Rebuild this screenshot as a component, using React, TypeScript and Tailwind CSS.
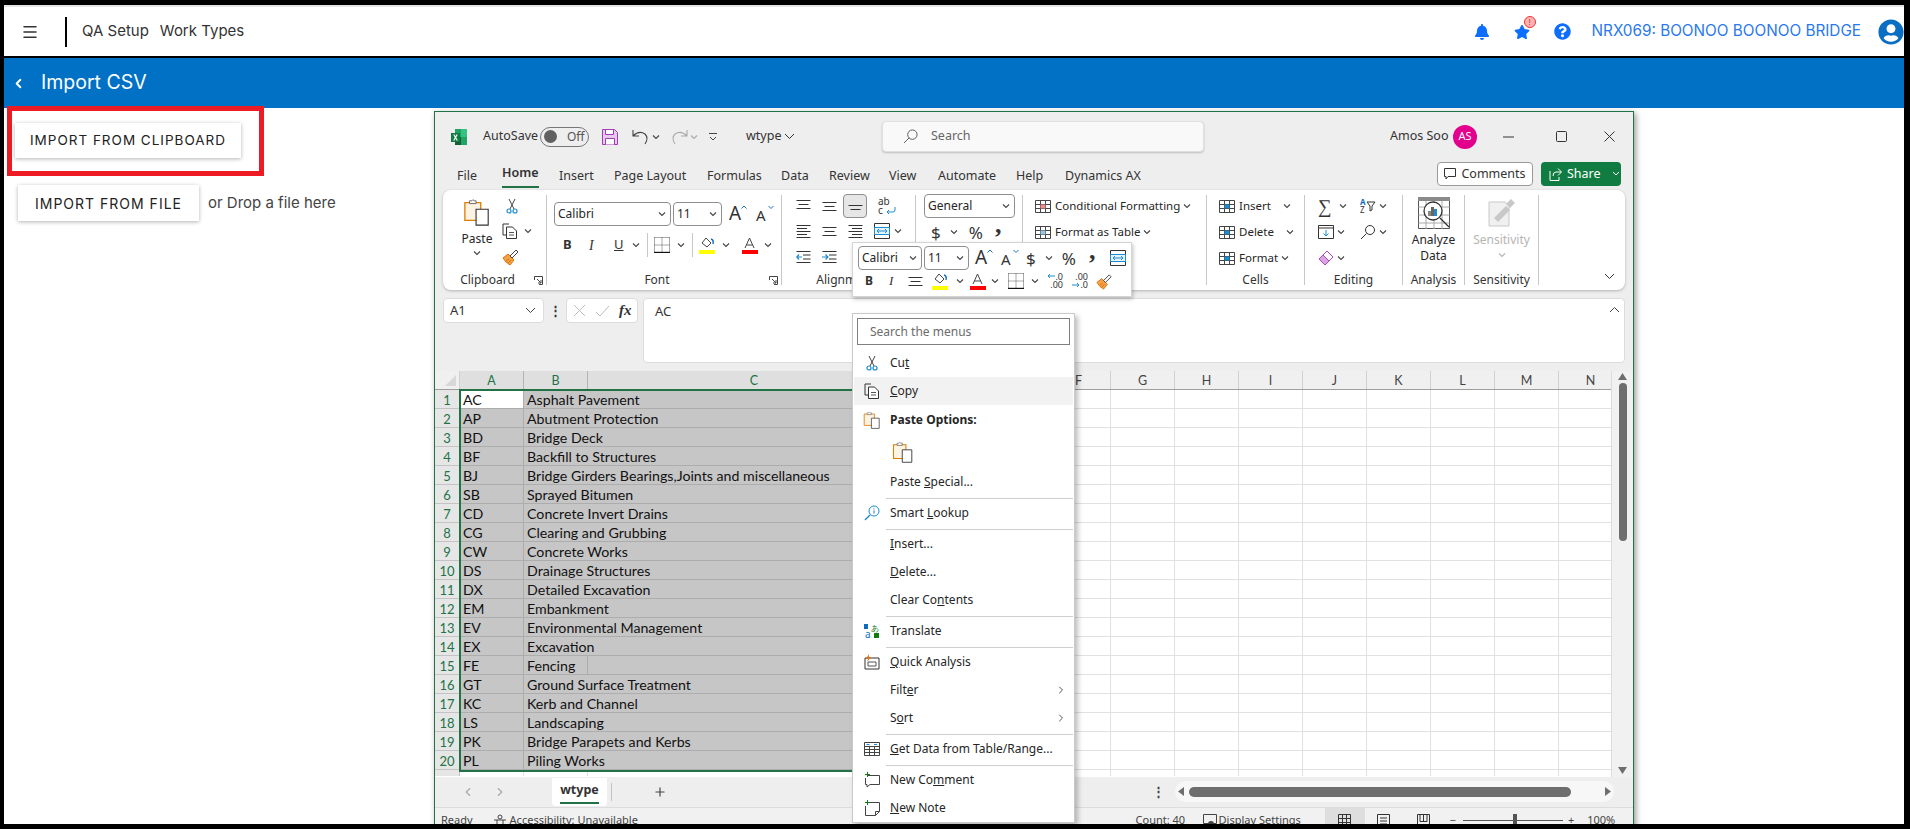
import type { ReactNode } from 'react'
import { ChevronLeft, ChevronRight, Menu, Plus } from 'lucide-react'
import { FaBell, FaQuestionCircle, FaStar, FaUserCircle } from 'react-icons/fa'

const rows = [
  ['AC', 'Asphalt Pavement'],
  ['AP', 'Abutment Protection'],
  ['BD', 'Bridge Deck'],
  ['BF', 'Backfill to Structures'],
  ['BJ', 'Bridge Girders Bearings,Joints and miscellaneous'],
  ['SB', 'Sprayed Bitumen'],
  ['CD', 'Concrete Invert Drains'],
  ['CG', 'Clearing and Grubbing'],
  ['CW', 'Concrete Works'],
  ['DS', 'Drainage Structures'],
  ['DX', 'Detailed Excavation'],
  ['EM', 'Embankment'],
  ['EV', 'Environmental Management'],
  ['EX', 'Excavation'],
  ['FE', 'Fencing'],
  ['GT', 'Ground Surface Treatment'],
  ['KC', 'Kerb and Channel'],
  ['LS', 'Landscaping'],
  ['PK', 'Bridge Parapets and Kerbs'],
  ['PL', 'Piling Works'],
]

const emptyCols = ['F', 'G', 'H', 'I', 'J', 'K', 'L', 'M', 'N']

function Chev({ className = '' }: { className?: string }) {
  return (
    <svg width="8" height="8" viewBox="0 0 8 8" className={`shrink-0 ${className}`}>
      <path d="M1 2.5 4 5.5 7 2.5" fill="none" stroke="#444" strokeWidth="1.1" />
    </svg>
  )
}

function PasteIcon({ size = 28 }: { size?: number }) {
  return (
    <svg width={size} height={size} viewBox="0 0 28 30" className="shrink-0">
      <path d="M1 5h17v19H1z" fill="#fdf3e3" stroke="#e07b00" strokeWidth="1.4" />
      <path d="M6 6V3h2.500q1-2.500 2.500 0H13v3z" fill="#fff" stroke="#666" />
      <path d="M13 12h13v17H13z" fill="#fff" stroke="#333" strokeWidth="1.200" />
    </svg>
  )
}

function Scissors({ size = 16 }: { size?: number }) {
  return (
    <svg width={size} height={size} viewBox="0 0 16 16" className="shrink-0">
      <path d="M5 1l5 10M11 1 6 11" stroke="#444" strokeWidth="1" fill="none" />
      <circle cx="5" cy="13" r="2" fill="none" stroke="#1e8bcd" strokeWidth="1.200" />
      <circle cx="11" cy="13" r="2" fill="none" stroke="#1e8bcd" strokeWidth="1.200" />
    </svg>
  )
}

function CopyIcon({ size = 16 }: { size?: number }) {
  return (
    <svg width={size} height={size} viewBox="0 0 16 16" className="shrink-0">
      <path d="M7 1H1v11h3" fill="none" stroke="#333" />
      <path d="M4.500 4h6l4 4v7.500h-10z" fill="#fff" stroke="#333" />
      <path d="M7 9.500h5M7 12h5" stroke="#555" />
    </svg>
  )
}

function Brush({ size = 18 }: { size?: number }) {
  return (
    <svg width={size} height={size} viewBox="0 0 18 18" className="shrink-0">
      <path d="M1 10l5-4 6 6-4 5q-4-2-7-7z" fill="#f7a145" stroke="#d9730d" />
      <path d="M4 13l3-2M6 15l3-3" stroke="#d9730d" />
      <path d="M8 8l6-6 2 2-6 6z" fill="#fff" stroke="#444" />
    </svg>
  )
}

function Lines({ align, y = 'center' }: { align: 'l' | 'c' | 'r'; y?: 'top' | 'center' | 'bottom' }) {
  const offs = { top: 1, center: 3, bottom: 6 }[y]
  const short = align === 'l' ? 'M1 0h10' : align === 'c' ? 'M2.500 0h9' : 'M4 0h10'
  if (y !== 'center' || align === 'c') {
    return (
      <svg width="15" height="14" viewBox="0 0 15 14" className="shrink-0">
        <path d={`M0.500 ${offs + 0.5}h14M2.500 ${offs + 4.5}h10M0.500 ${offs + 8.5}h14`} stroke="#333" fill="none" />
      </svg>
    )
  }
  return (
    <svg width="15" height="14" viewBox="0 0 15 14" className="shrink-0">
      <path d="M0.500 1.500h14M0.500 7.500h14M0.500 13.500h14" stroke="#333" fill="none" />
      <path d={`${short.replace(' 0', ' 4.5')}`} stroke="#333" fill="none" />
      <path d={`${short.replace(' 0', ' 10.5')}`} stroke="#333" fill="none" />
    </svg>
  )
}

function Indent({ out }: { out?: boolean }) {
  return (
    <svg width="15" height="14" viewBox="0 0 15 14" className="shrink-0">
      <path d="M0.500 1.500h14M7 5h7.500M7 9h7.500M0.500 12.500h14" stroke="#333" fill="none" />
      <path d={out ? 'M6 7H1m2-2.500L.8 7 3 9.500' : 'M0 7h5.500M3.500 4.500 6 7 3.500 9.500'} stroke="#1e8bcd" strokeWidth="1.200" fill="none" />
    </svg>
  )
}

function Merge({ size = 16 }: { size?: number }) {
  return (
    <svg width={size} height={size} viewBox="0 0 16 16" className="shrink-0">
      <path d="M.5.500h15v15H.500zM.5 4.500h15M.5 11.500h15" stroke="#333" fill="none" />
      <path d="M.5 4.500h15v7H.500z" fill="#e6f3fb" stroke="#1e8bcd" />
      <path d="M3 8h10M5 6 3 8l2 2M11 6l2 2-2 2" stroke="#1e8bcd" fill="none" />
    </svg>
  )
}

function Borders() {
  return (
    <svg width="16" height="16" viewBox="0 0 16 16" className="shrink-0">
      <path d="M.5.500h15M.5.500v15M15.500.500v15M8 .5v15M.5 8h15" stroke="#555" strokeDasharray="1 1" fill="none" />
      <path d="M0 15.500h16" stroke="#111" strokeWidth="1.400" />
    </svg>
  )
}

function FillColor() {
  return (
    <svg width="17" height="17" viewBox="0 0 17 17" className="shrink-0">
      <path d="M7 1l5 5-4 4-5-4z" fill="#fff" stroke="#444" />
      <path d="M12 2q3 1 2 5" fill="none" stroke="#1e6fc8" strokeWidth="1.500" />
      <path d="M0 13h16v4H0z" fill="#ffff00" />
    </svg>
  )
}

function FontColor() {
  return (
    <svg width="17" height="17" viewBox="0 0 17 17" className="shrink-0">
      <path d="M4 11 8.500 1 13 11M5.500 8h6" fill="none" stroke="#444" />
      <path d="M1 13h16v4H1z" fill="#ff0000" />
    </svg>
  )
}

function GrowA({ shrink }: { shrink?: boolean }) {
  return (
    <div className="relative flex h-[18px] w-[18px] shrink-0 items-end">
      <span className={`leading-none text-[#333] ${shrink ? 'text-[15px]' : 'text-[19px]'}`}>A</span>
      <svg width="6" height="5" viewBox="0 0 6 5" className="absolute right-0 top-0">
        <path d={shrink ? 'M.5 1 3 3.500 5.500 1' : 'M.5 3.500 3 1l2.500 2.500'} stroke="#1e6fc8" fill="none" />
      </svg>
    </div>
  )
}

function Decimal({ more }: { more?: boolean }) {
  return (
    <div className="relative flex h-[16px] w-[16px] shrink-0 flex-col items-end text-[9px] leading-[8px] text-[#333]">
      <span>{more ? '.00' : '.0'}</span>
      <span>{more ? '.0' : '.00'}</span>
      <svg width="8" height="6" viewBox="0 0 8 6" className={`absolute left-0 ${more ? 'top-[9px]' : 'top-0'}`}>
        <path d={more ? 'M0 3h7M5 1l2 2-2 2' : 'M8 3H1M3 1 1 3l2 2'} stroke="#1e8bcd" fill="none" />
      </svg>
    </div>
  )
}

function Dropdown({ label, w }: { label: string; w: string }) {
  return (
    <div className={`flex h-[24px] ${w} items-center justify-between rounded-[4px] border border-[#8f8f8f] bg-white pl-[3px] pr-[4px] text-[12px] text-[#262626]`}>
      <span>{label}</span>
      <Chev />
    </div>
  )
}

function Group({ label, w, children, launcher, labelPad = '' }: { label: string; w: string; children: ReactNode; launcher?: boolean; labelPad?: string }) {
  return (
    <div className={`relative my-[5px] flex ${w} shrink-0 flex-col border-r border-[#c8c8c8]`}>
      <div className="min-h-0 flex-1">{children}</div>
      <div className={`-mb-[3px] h-[16px] text-center text-[12px] leading-[16px] text-[#333] ${labelPad}`}>{label}</div>
      {launcher && (
        <svg width="9" height="9" viewBox="0 0 9 9" className="absolute bottom-0 right-[3px]">
          <path d="M.5 4V.500H8.500V8.500H5M3 3l4 4M7 4v3H4" stroke="#444" fill="none" />
        </svg>
      )}
    </div>
  )
}

function StyleRow({ icon, label, chevMargin }: { icon: ReactNode; label: string; chevMargin?: string }) {
  return (
    <div className="flex h-[26px] items-center">
      {icon}
      <span className="ml-[4px] whitespace-nowrap text-[11.5px] text-[#262626]">{label}</span>
      <Chev className={chevMargin ?? 'ml-[3px]'} />
    </div>
  )
}

function TableIcon({ tint, mark }: { tint: string; mark?: ReactNode }) {
  return (
    <svg width="16" height="16" viewBox="0 0 16 16" className="shrink-0">
      <path d="M.5 2.500h15v12H.500zM.5 6.500h15M.5 10.500h15M5.500 2.500v12M10.500 2.500v12" stroke="#444" fill="none" />
      <path d="M5.500 6.500h5v4h-5z" fill={tint} />
      {mark}
    </svg>
  )
}

function MenuItem({ icon, children, arrow, hover, bold, h = 'h-[28px]' }: { icon?: ReactNode; children: ReactNode; arrow?: boolean; hover?: boolean; bold?: boolean; h?: string }) {
  return (
    <div className={`mx-[1px] flex ${h} items-center text-[12px] ${hover ? 'bg-[#f2f2f2]' : ''} ${bold ? 'font-bold' : ''}`}>
      <div className="flex w-[36px] shrink-0 justify-center">{icon}</div>
      <div className="flex-1 whitespace-nowrap text-[#262626]">{children}</div>
      {arrow && <ChevronRight size={12} className="mr-[6px] text-[#555]" />}
    </div>
  )
}

function Sep() {
  return <div className="ml-[33px] mr-[1px] h-[3px] border-b border-[#cfcfcf]" />
}

function ContextMenu() {
  return (
    <div className="absolute left-[417px] top-[201px] w-[223px] border border-[#c9c9c9] bg-white pt-[4px] font-['Noto_Sans',sans-serif] shadow-[3px_3px_5px_rgba(0,0,0,0.25)]">
      <div className="mx-[4px] mb-[4px] flex h-[27px] items-center border border-[#7f7f7f] pl-[12px] text-[12px] text-[#6b6b6b]">Search the menus</div>
      <MenuItem icon={<Scissors />}>Cu<u>t</u></MenuItem>
      <MenuItem icon={<CopyIcon />} hover><u>C</u>opy</MenuItem>
      <MenuItem icon={<PasteIcon size={18} />} bold h="h-[30px]">Paste Options:</MenuItem>
      <div className="flex h-[33px] items-center pl-[39px]"><PasteIcon size={22} /></div>
      <MenuItem>Paste <u>S</u>pecial...</MenuItem>
      <Sep />
      <MenuItem icon={
        <svg width="16" height="16" viewBox="0 0 16 16"><circle cx="10" cy="6" r="5" fill="none" stroke="#1e8bcd" /><path d="M6 10 1 15" stroke="#1e8bcd" strokeWidth="1.500" /><path d="M10 3.500v1M10 5.500v3" stroke="#1e6fc8" /></svg>
      }>Smart <u>L</u>ookup</MenuItem>
      <Sep />
      <MenuItem><u>I</u>nsert...</MenuItem>
      <MenuItem><u>D</u>elete...</MenuItem>
      <MenuItem>Clear Co<u>n</u>tents</MenuItem>
      <Sep />
      <MenuItem icon={
        <svg width="16" height="16" viewBox="0 0 16 16"><path d="M0 1h4v5H0z" fill="#0f6cbd" /><text x="1" y="15" fontSize="10" fill="#0f6cbd">a</text><path d="M10 10h5v5h-5z" fill="#107c10" /><text x="7" y="8" fontSize="8" fill="#107c10">あ</text></svg>
      }>Translate</MenuItem>
      <Sep />
      <MenuItem icon={
        <svg width="16" height="16" viewBox="0 0 16 16"><path d="M1 4h14v11H1z" fill="none" stroke="#333" /><path d="M4 8h8v4H4z" fill="none" stroke="#555" /><path d="M5 0 2 5h2L3 8l4-5H5z" fill="#e8710a" /></svg>
      }><u>Q</u>uick Analysis</MenuItem>
      <MenuItem arrow>Filt<u>e</u>r</MenuItem>
      <MenuItem arrow>S<u>o</u>rt</MenuItem>
      <Sep />
      <MenuItem icon={
        <svg width="16" height="16" viewBox="0 0 16 16"><path d="M.5 1.500h15v13H.500zM.5 5.500h15M.5 8.500h15M.5 11.500h15M5.500 5.500v9M10.500 5.500v9" stroke="#444" fill="none" /><path d="M2.500 3.500h3M10 3.500h3" stroke="#1e8bcd" /></svg>
      }><u>G</u>et Data from Table/Range...</MenuItem>
      <Sep />
      <MenuItem icon={
        <svg width="16" height="16" viewBox="0 0 16 16"><path d="M4 3.500h11.500v9H6L3 15v-2.500H1.500V6" fill="none" stroke="#444" /><path d="M3.500 0v5M1 2.500h5" stroke="#107c10" /></svg>
      }>New Co<u>m</u>ment</MenuItem>
      <MenuItem icon={
        <svg width="16" height="16" viewBox="0 0 16 16"><path d="M5 2.500h10.500v9l-4 4h-10V6" fill="none" stroke="#444" /><path d="M11.500 15.500v-4h4" fill="none" stroke="#444" /><path d="M3.500 0v5M1 2.500h5" stroke="#107c10" /></svg>
      }><u>N</u>ew Note</MenuItem>
    </div>
  )
}

function MiniToolbar() {
  return (
    <div className="absolute left-[417px] top-[130px] flex h-[55px] w-[280px] flex-col border border-[#d4d4d4] bg-white pl-[5px] pt-[3px] font-['Noto_Sans',sans-serif] shadow-[1px_2px_4px_rgba(0,0,0,0.25)]">
      <div className="flex h-[24px] items-center">
        <Dropdown label="Calibri" w="w-[64px]" />
        <div className="ml-[2px]"><Dropdown label="11" w="w-[45px]" /></div>
        <div className="ml-[6px]"><GrowA /></div>
        <div className="ml-[8px]"><GrowA shrink /></div>
        <span className="ml-[7px] text-[17px] leading-none text-[#333]">$</span>
        <Chev className="ml-[9px]" />
        <span className="ml-[9px] text-[17px] leading-none text-[#333]">%</span>
        <span className="-mt-[14px] ml-[13px] font-['Liberation_Serif',serif] text-[26px] font-bold leading-[12px] text-[#333]">,</span>
        <div className="ml-[15px]"><Merge /></div>
      </div>
      <div className="flex h-[22px] items-center pl-[7px]">
        <span className="w-[10px] text-[12px] font-bold text-[#333]">B</span>
        <span className="ml-[14px] w-[10px] font-['Liberation_Serif',serif] text-[13px] italic text-[#333]">I</span>
        <div className="ml-[9px]"><Lines align="c" /></div>
        <div className="ml-[9px]"><FillColor /></div>
        <Chev className="ml-[7px]" />
        <div className="ml-[5px]"><FontColor /></div>
        <Chev className="ml-[5px]" />
        <div className="ml-[9px]"><Borders /></div>
        <Chev className="ml-[7px]" />
        <div className="ml-[8px]"><Decimal /></div>
        <div className="ml-[9px]"><Decimal more /></div>
        <div className="ml-[8px]"><Brush size={17} /></div>
      </div>
    </div>
  )
}

function Ribbon() {
  return (
    <div className="mx-[8px] flex h-[100px] shrink-0 rounded-[8px] bg-white shadow-[0_1px_3px_rgba(0,0,0,0.25)]">
      <Group label="Clipboard" w="w-[104px]" launcher labelPad="pr-[14px]">
        <div className="flex">
          <div className="ml-[20px] flex w-[28px] flex-col items-center">
            <div className="mt-[3px]"><PasteIcon /></div>
            <span className="mt-[5px] text-[12px] leading-[16px] text-[#262626]">Paste</span>
            <Chev className="mt-[2px]" />
          </div>
          <div className="ml-[11px] flex flex-col gap-[9px] pt-[3px]">
            <div className="ml-[2px]"><Scissors /></div>
            <div className="flex items-center"><CopyIcon /><Chev className="ml-[6px]" /></div>
            <Brush />
          </div>
        </div>
      </Group>
      <Group label="Font" w="w-[235px]" launcher labelPad="pr-[14px]">
        <div className="ml-[7px] mt-[7px] flex items-center">
          <Dropdown label="Calibri" w="w-[117px]" />
          <div className="ml-[2px]"><Dropdown label="11" w="w-[49px]" /></div>
          <div className="ml-[7px]"><GrowA /></div>
          <div className="ml-[9px]"><GrowA shrink /></div>
        </div>
        <div className="ml-[16px] mt-[10px] flex h-[18px] items-center">
          <span className="w-[10px] text-[13px] font-bold text-[#333]">B</span>
          <span className="ml-[16px] w-[8px] font-['Liberation_Serif',serif] text-[14px] italic text-[#333]">I</span>
          <span className="ml-[17px] w-[10px] text-[13px] text-[#333] underline">U</span>
          <Chev className="ml-[8px]" />
          <div className="ml-[7px] h-[24px] w-px bg-[#c8c8c8]" />
          <div className="ml-[6px]"><Borders /></div>
          <Chev className="ml-[7px]" />
          <div className="ml-[7px] h-[24px] w-px bg-[#c8c8c8]" />
          <div className="ml-[6px]"><FillColor /></div>
          <Chev className="ml-[6px]" />
          <div className="ml-[11px]"><FontColor /></div>
          <Chev className="ml-[6px]" />
        </div>
      </Group>
      <Group label="Alignment" w="w-[134px]" labelPad="pr-[6px]">
        <div className="-mt-[1px] ml-[14px] flex h-[24px] items-center gap-[11px]">
          <Lines align="c" y="top" />
          <Lines align="c" y="center" />
          <div className="-ml-[5px] flex h-[24px] w-[24px] items-center justify-center rounded-[4px] border border-[#8f8f8f] bg-[#e6e6e6]"><Lines align="c" y="bottom" /></div>
          <div className="relative h-[18px] w-[16px] text-[10px] leading-[9px] text-[#333]">
            ab<br />c
            <svg width="11" height="8" viewBox="0 0 11 8" className="absolute bottom-0 right-[-2px]"><path d="M10 0v3q0 2-2 2H2M4 3 2 5l2 2" fill="none" stroke="#1e8bcd" /></svg>
          </div>
        </div>
        <div className="ml-[14px] mt-[5px] flex h-[16px] items-center gap-[11px]">
          <Lines align="l" />
          <Lines align="c" />
          <Lines align="r" />
          <Merge />
          <Chev className="-ml-[7px]" />
        </div>
        <div className="ml-[14px] mt-[11px] flex h-[14px] items-center gap-[11px]">
          <Indent out />
          <Indent />
        </div>
      </Group>
      <Group label="" w="w-[107px]">
        <div className="-mt-[1px] ml-[8px]"><Dropdown label="General" w="w-[91px]" /></div>
        <div className="ml-[15px] mt-[5px] flex h-[18px] items-center">
          <span className="text-[17px] leading-none text-[#333]">$</span>
          <Chev className="ml-[9px]" />
          <span className="ml-[11px] text-[17px] leading-none text-[#333]">%</span>
          <span className="-mt-[14px] ml-[12px] font-['Liberation_Serif',serif] text-[26px] font-bold leading-[12px] text-[#333]">,</span>
        </div>
      </Group>
      <Group label="" w="w-[184px]">
        <div className="-mt-[2px] ml-[12px]">
          <StyleRow icon={<TableIcon tint="#f48a8a" />} label="Conditional Formatting" />
          <StyleRow icon={<TableIcon tint="#9cc7ea" />} label="Format as Table" />
        </div>
      </Group>
      <Group label="Cells" w="w-[98px]">
        <div className="-mt-[2px] ml-[12px]">
          <StyleRow icon={<TableIcon tint="#1e8bcd" />} label="Insert" chevMargin="ml-[12px]" />
          <StyleRow icon={<TableIcon tint="#1e8bcd" />} label="Delete" chevMargin="ml-[12px]" />
          <StyleRow icon={<TableIcon tint="#1e8bcd" />} label="Format" chevMargin="ml-[3px]" />
        </div>
      </Group>
      <Group label="Editing" w="w-[98px]">
        <div className="-mt-[2px] ml-[13px] grid grid-cols-2">
          <div className="flex h-[26px] items-center">
            <span className="w-[14px] font-['Liberation_Serif',serif] text-[19px] leading-none text-[#333]">∑</span>
            <Chev className="ml-[7px]" />
          </div>
          <div className="flex h-[26px] items-center">
            <svg width="16" height="16" viewBox="0 0 16 16"><text x="0" y="7" fontSize="8" fontWeight="bold" fill="#0f6cbd">A</text><text x="0" y="15" fontSize="8" fill="#333">Z</text><path d="M7 4h8l-3 4v4l-2 1V8z" fill="none" stroke="#333" /></svg>
            <Chev className="ml-[3px]" />
          </div>
          <div className="flex h-[26px] items-center">
            <svg width="16" height="16" viewBox="0 0 16 16"><path d="M.5 1.500h15v13H.500zM.5 4h15" stroke="#333" fill="none" /><path d="M8 6v6M5.500 9.500 8 12l2.500-2.500" stroke="#1e8bcd" fill="none" /></svg>
            <Chev className="ml-[3px]" />
          </div>
          <div className="flex h-[26px] items-center">
            <svg width="16" height="16" viewBox="0 0 16 16"><circle cx="10" cy="6" r="4.500" fill="none" stroke="#333" /><path d="M6.500 9.500 1 15" stroke="#333" /></svg>
            <Chev className="ml-[3px]" />
          </div>
          <div className="flex h-[26px] items-center">
            <svg width="16" height="16" viewBox="0 0 16 16"><path d="M1 9l8-8 6 6-8 8z" fill="#fff" stroke="#b146c2" /><path d="M1 9l4-4 6 6-4 4z" fill="#d8a5e0" stroke="#b146c2" /></svg>
            <Chev className="ml-[3px]" />
          </div>
        </div>
      </Group>
      <Group label="Analysis" w="w-[62px]">
        <div className="flex flex-col items-center">
          <svg width="32" height="32" viewBox="0 0 32 32" className="mt-[2px]">
            <path d="M.5.500h31v31H.500z" fill="#fff" stroke="#555" />
            <path d="M0 0h32v4H0z" fill="#8a8a8a" />
            <path d="M.5 10h31M.5 18h31M.5 26h31M8 4v28M16 4v28M24 4v28" stroke="#aaa" />
            <circle cx="15" cy="14" r="9" fill="#fff" stroke="#333" strokeWidth="1.300" />
            <path d="M22 21l9 9" stroke="#333" strokeWidth="1.300" />
            <path d="M10 14h3v5h-3z" fill="#888" /><path d="M13 10h3v9h-3z" fill="#666" /><path d="M16 12h3v7h-3z" fill="#1e8bcd" />
          </svg>
          <span className="mt-[3px] text-center text-[12px] leading-[16px] text-[#262626]">Analyze<br />Data</span>
        </div>
      </Group>
      <Group label="Sensitivity" w="w-[74px]">
        <div className="flex flex-col items-center">
          <svg width="28" height="30" viewBox="0 0 28 30" className="mt-[3px]">
            <path d="M1 4h16l4 4v20H1z" fill="#f0f0f0" stroke="#c8c8c8" />
            <path d="M6 20 18 8l4 4-12 12z" fill="#c8c8c8" />
            <path d="M18 6l5-5 4 4-5 5z" fill="#c8c8c8" />
          </svg>
          <span className="mt-[4px] text-[12px] leading-[16px] text-[#b5b5b5]">Sensitivity</span>
          <Chev className="mt-[3px] opacity-40" />
        </div>
      </Group>
      <div className="flex flex-1 items-end justify-end pb-[10px] pr-[10px]">
        <svg width="11" height="7" viewBox="0 0 11 7"><path d="M1 1l4.500 4.500L10 1" stroke="#333" fill="none" /></svg>
      </div>
    </div>
  )
}

function TitleBar() {
  return (
    <div className="flex h-[48px] shrink-0 items-center pt-[1px] text-[12.5px] text-[#333]">
      <svg width="16" height="16" viewBox="0 0 16 16" className="ml-[16px] shrink-0">
        <path d="M4 0h12v16H4z" fill="#21a366" />
        <path d="M10 0h6v8h-6z" fill="#33c481" />
        <path d="M4 8h6v8H4z" fill="#185c37" />
        <path d="M0 4h9v9H0z" fill="#107c41" />
        <path d="M2.200 5.500h1.400L4.500 7.300l1-1.800h1.300L5.200 8.500l1.700 3H5.500l-1-2-1 2H2.100l1.700-3z" fill="#fff" />
      </svg>
      <span className="ml-[16px] w-[50px]">AutoSave</span>
      <div className="ml-[7px] flex h-[20px] w-[49px] items-center rounded-full border border-[#777] pl-[3px]">
        <div className="h-[13px] w-[13px] rounded-full bg-[#616161]" />
        <span className="ml-[10px] text-[12px] text-[#555]">Off</span>
      </div>
      <svg width="16" height="16" viewBox="0 0 16 16" className="ml-[13px] shrink-0">
        <path d="M.5.500h12l3 3v12H.500z" fill="#e8c9ee" stroke="#a23cb4" />
        <path d="M3.500.5h8v5h-8zM3.500 15.500v-6h9v6" fill="#fff" stroke="#a23cb4" />
      </svg>
      <svg width="18" height="16" viewBox="0 0 18 16" className="ml-[14px] shrink-0">
        <path d="M1 1v6h6M1 7q6-6 12-2 4 4 0 10" fill="none" stroke="#444" strokeWidth="1.100" />
      </svg>
      <Chev className="ml-[2px]" />
      <svg width="18" height="16" viewBox="0 0 18 16" className="ml-[10px] shrink-0">
        <path d="M17 1v6h-6M17 7q-6-6-12-2-4 4 0 10" fill="none" stroke="#aaa" strokeWidth="1.100" />
      </svg>
      <Chev className="ml-[2px] opacity-40" />
      <svg width="8" height="8" viewBox="0 0 8 8" className="ml-[11px] shrink-0">
        <path d="M0 .5h8M1 4l3 3 3-3" stroke="#444" fill="none" />
      </svg>
      <span className="ml-[29px] w-[38px] text-[12.5px]">wtype</span>
      <svg width="11" height="7" viewBox="0 0 11 7" className="shrink-0"><path d="M1 1l4.500 4.500L10 1" stroke="#333" fill="none" /></svg>
      <div className="ml-[87px] flex h-[31px] w-[322px] items-center rounded-[4px] border border-[#e0e0e0] bg-[#f9f9f9] pl-[20px] shadow-[0_1px_2px_rgba(0,0,0,0.2)]">
        <svg width="15" height="15" viewBox="0 0 16 16"><circle cx="10" cy="6" r="5" fill="none" stroke="#555" /><path d="M6.500 9.500 1 15" stroke="#555" /></svg>
        <span className="ml-[13px] text-[#666]">Search</span>
      </div>
      <span className="ml-[186px] w-[54px] whitespace-nowrap">Amos Soo</span>
      <div className="ml-[9px] flex h-[24px] w-[24px] items-center justify-center rounded-full bg-[#e3008c] text-[11px] text-white">AS</div>
      <svg width="11" height="2" viewBox="0 0 11 2" className="ml-[26px] shrink-0"><path d="M0 1h11" stroke="#333" /></svg>
      <svg width="11" height="11" viewBox="0 0 11 11" className="ml-[42px] shrink-0"><rect x=".5" y=".5" width="10" height="10" rx="1" fill="none" stroke="#333" /></svg>
      <svg width="11" height="11" viewBox="0 0 11 11" className="ml-[37px] shrink-0"><path d="M.5.500l10 10M10.500.500l-10 10" stroke="#333" /></svg>
    </div>
  )
}

function MenuTabs() {
  return (
    <div className="flex h-[30px] shrink-0 pl-[22px] text-[12.5px] leading-[32px] text-[#333]">
      <span className="w-[45px]">File</span>
      <div className="w-[57px]">
        <span className="block w-[37px] border-b-2 border-[#217346] font-semibold leading-[26px]">Home</span>
      </div>
      <span className="w-[55px]">Insert</span>
      <span className="w-[93px]">Page Layout</span>
      <span className="w-[74px]">Formulas</span>
      <span className="w-[48px]">Data</span>
      <span className="w-[60px]">Review</span>
      <span className="w-[49px]">View</span>
      <span className="w-[78px]">Automate</span>
      <span className="w-[49px]">Help</span>
      <span className="whitespace-nowrap">Dynamics AX</span>
    </div>
  )
}

function FormulaBar() {
  return (
    <div className="mx-[8px] mt-[8px] flex h-[65px] shrink-0 items-start text-[13px] text-[#333]">
      <div className="flex h-[25px] w-[101px] items-center justify-between rounded-[4px] border border-[#dcdcdc] bg-white pl-[6px] pr-[7px]">
        A1
        <svg width="11" height="7" viewBox="0 0 11 7"><path d="M1 1l4.500 4.500L10 1" stroke="#444" fill="none" /></svg>
      </div>
      <span className="w-[22px] text-center font-bold leading-[24px]">⋮</span>
      <div className="flex h-[25px] w-[72px] items-center gap-[9px] rounded-[4px] border border-[#dcdcdc] bg-white pl-[6px]">
        <svg width="13" height="13" viewBox="0 0 13 13"><path d="M1 1l11 11M12 1 1 12" stroke="#bbb" /></svg>
        <svg width="15" height="12" viewBox="0 0 15 12"><path d="M1 7l4 4L14 1" stroke="#bbb" fill="none" /></svg>
        <span className="font-['Liberation_Serif',serif] text-[15px] font-bold italic leading-none">fx</span>
      </div>
      <div className="relative ml-[5px] flex h-[65px] flex-1 rounded-[4px] border border-[#dcdcdc] bg-white pl-[11px] pt-[3px]">
        AC
        <svg width="11" height="7" viewBox="0 0 11 7" className="absolute right-[4px] top-[7px]"><path d="M1 6l4.500-4.500L10 6" stroke="#444" fill="none" /></svg>
      </div>
    </div>
  )
}

function Sheet() {
  return (
    <div className="relative mt-[8px] flex h-[406px] shrink-0 bg-white font-['Lato',sans-serif]">
      <div className="w-[1176px] shrink-0 overflow-hidden">
        <div className="flex h-[19px] border-b border-[#9e9e9e] bg-[#f0f0f0] text-center text-[12.5px] leading-[19px] text-[#444]">
          <div className="flex w-[25px] shrink-0 items-end justify-end border-r border-[#d0d0d0] pb-[3px] pr-[3px]">
            <svg width="11" height="11" viewBox="0 0 11 11"><path d="M11 0v11H0z" fill="#d8d8d8" /></svg>
          </div>
          <div className="w-[64px] shrink-0 border-r border-[#b5b5b5] bg-[#dfdfdf] text-[#217346]">A</div>
          <div className="w-[64px] shrink-0 border-r border-[#b5b5b5] bg-[#dfdfdf] text-[#217346]">B</div>
          <div className="w-[332px] shrink-0 bg-[#dfdfdf] text-[#217346]">C</div>
          <div className="w-[64px] shrink-0 border-r border-[#d0d0d0]" />
          <div className="w-[63px] shrink-0 border-r border-[#d0d0d0]" />
          {emptyCols.map(c => (
            <div key={c} className="w-[64px] shrink-0 border-r border-[#d0d0d0]">{c}</div>
          ))}
        </div>
        {rows.map((r, i) => (
          <div key={r[0]} className="flex h-[19px] text-[14.2px] leading-[20px] text-[#111]">
            <div className="w-[25px] shrink-0 border-b border-r border-[#c4c4c4] bg-[#e6e6e6] text-center text-[13px] text-[#217346]">{i + 1}</div>
            <div className={`w-[64px] shrink-0 border-b border-r border-[#adadad] pl-[3px] ${i === 0 ? 'bg-white' : 'bg-[#c6c6c6]'}`}>{r[0]}</div>
            <div className="relative w-[396px] shrink-0 whitespace-nowrap border-b border-[#adadad] bg-[#c6c6c6] pl-[3px]">
              {r[1]}
              {r[0] === 'FE' && <div className="absolute left-[63px] top-0 h-full w-px bg-[#adadad]" />}
            </div>
            <div className="w-[64px] shrink-0 border-b border-r border-[#e1e1e1]" />
            <div className="w-[63px] shrink-0 border-b border-r border-[#e1e1e1]" />
            {emptyCols.map(c => (
              <div key={c} className="w-[64px] shrink-0 border-b border-r border-[#e1e1e1]" />
            ))}
          </div>
        ))}
        <div className="flex h-[6px]">
          <div className="w-[25px] shrink-0 border-r border-[#c4c4c4] bg-[#e6e6e6]" />
          <div className="w-[64px] shrink-0 border-r border-[#e1e1e1]" />
          <div className="w-[64px] shrink-0 border-r border-[#e1e1e1]" />
          <div className="w-[332px] shrink-0" />
          <div className="w-[64px] shrink-0 border-r border-[#e1e1e1]" />
          <div className="w-[63px] shrink-0 border-r border-[#e1e1e1]" />
          {emptyCols.map(c => (
            <div key={c} className="w-[64px] shrink-0 border-r border-[#e1e1e1]" />
          ))}
        </div>
      </div>
      {/* selection outline sits over the cells */}
      <div className="pointer-events-none absolute left-[24px] top-[18px] h-[383px] w-[462px] border-[2px] border-[#217346]" />
      <div className="flex w-[22px] flex-col items-center border-l border-[#dcdcdc] bg-[#f1f1f1] pt-[2px]">
        <svg width="9" height="7" viewBox="0 0 9 7"><path d="M4.500 0 9 7H0z" fill="#6e6e6e" /></svg>
        <div className="mt-[3px] h-[158px] w-[8px] rounded-full bg-[#6e6e6e]" />
        <div className="flex-1" />
        <svg width="9" height="7" viewBox="0 0 9 7" className="mb-[3px]"><path d="M4.500 7 9 0H0z" fill="#6e6e6e" /></svg>
      </div>
    </div>
  )
}

function SheetTabs() {
  return (
    <div className="flex h-[29px] shrink-0 items-center font-['Noto_Sans',sans-serif]">
      <ChevronLeft size={14} className="ml-[26px] text-[#a8a8a8]" />
      <ChevronRight size={14} className="ml-[18px] text-[#a8a8a8]" />
      <div className="ml-[45px] flex h-[28px] w-[55px] flex-col items-center rounded-b-[4px] bg-white text-[12.5px] font-bold leading-[24px] text-[#333]">
        wtype
        <div className="h-[2px] w-[39px] bg-[#217346]" />
      </div>
      <div className="ml-[4px] h-[18px] w-px bg-[#c4c4c4]" />
      <Plus size={14} className="ml-[41px] text-[#444]" />
      <span className="ml-[485px] w-[10px] text-center text-[13px] font-bold text-[#444]">⋮</span>
      <div className="ml-[13px] flex h-[21px] w-[439px] items-center rounded-full bg-[#f7f7f7] px-[3px]">
        <svg width="6" height="9" viewBox="0 0 6 9" className="shrink-0"><path d="M0 4.500 6 0v9z" fill="#6e6e6e" /></svg>
        <div className="ml-[5px] h-[10px] w-[382px] rounded-full bg-[#6e6e6e]" />
        <div className="flex-1" />
        <svg width="6" height="9" viewBox="0 0 6 9" className="shrink-0"><path d="M6 4.500 0 0v9z" fill="#6e6e6e" /></svg>
      </div>
    </div>
  )
}

function StatusBar() {
  return (
    <div className="mt-[1px] flex h-[26px] shrink-0 items-center border-t border-[#dcdcdc] bg-[#f1f1f1] text-[11px] text-[#444]">
      <span className="ml-[6px]">Ready</span>
      <svg width="14" height="14" viewBox="0 0 14 14" className="ml-[20px] shrink-0"><circle cx="7" cy="3" r="2" fill="none" stroke="#444" /><path d="M1 6h12M4 6v4l-2 4M10 6v4l2 4" stroke="#444" fill="none" /></svg>
      <span className="ml-[3px] w-[626px] whitespace-nowrap">Accessibility: Unavailable</span>
      <span className="w-[67px] whitespace-nowrap">Count: 40</span>
      <svg width="14" height="14" viewBox="0 0 14 14" className="shrink-0"><path d="M.5.500h13v9h-13z" fill="none" stroke="#444" /><circle cx="8" cy="10" r="3" fill="#444" /></svg>
      <span className="ml-[2px] w-[100px] whitespace-nowrap">Display Settings</span>
      <div className="ml-[6px] flex h-[26px] w-[40px] shrink-0 items-center justify-center bg-[#dedede]">
        <svg width="13" height="13" viewBox="0 0 13 13"><path d="M.5.500h12v12H.500zM.5 4.500h12M.5 8.500h12M4.500.500v12M8.500.500v12" stroke="#333" fill="none" /></svg>
      </div>
      <svg width="13" height="14" viewBox="0 0 13 14" className="ml-[12px] shrink-0"><path d="M.5.500h12v13H.500zM3 4h7M3 7h7M3 10h7" stroke="#333" fill="none" /></svg>
      <svg width="13" height="13" viewBox="0 0 13 13" className="ml-[27px] shrink-0"><path d="M.5.500h12v12H.500zM6.500.500v7M3 .5v7h7V.500" stroke="#333" fill="none" /></svg>
      <span className="ml-[20px]">−</span>
      <div className="relative ml-[7px] h-px w-[100px] shrink-0 bg-[#555]">
        <div className="absolute left-[50px] top-[-6px] h-[13px] w-[4px] bg-[#555]" />
      </div>
      <span className="ml-[5px]">+</span>
      <span className="ml-[13px]">100%</span>
    </div>
  )
}

function ExcelWindow() {
  return (
    <div className="relative mt-[3px] flex h-[760px] w-[1200px] shrink-0 flex-col border border-[#217346] bg-[#eeeeee] font-['Noto_Sans',sans-serif] shadow-[2px_2px_6px_rgba(0,0,0,0.4)]">
      <TitleBar />
      <div className="relative">
        <MenuTabs />
        <div className="absolute right-[12px] top-[2px] flex items-center gap-[8px] text-[12.5px]">
          <div className="flex h-[24px] w-[96px] items-center justify-center gap-[5px] rounded-[4px] border border-[#9a9a9a] bg-white text-[#333]">
            <svg width="12" height="12" viewBox="0 0 12 12"><path d="M.5.500h11v8H4L2 11V8.500H.500z" fill="none" stroke="#333" /></svg>
            Comments
          </div>
          <div className="flex h-[24px] w-[80px] items-center rounded-[4px] bg-[#107c41] pl-[8px] text-white">
            <svg width="13" height="13" viewBox="0 0 13 13"><path d="M9 .5 12.500 4 9 7.500M12 4H7Q4 4 4 8M1 3v9.500h9V9" fill="none" stroke="#fff" /></svg>
            <span className="ml-[5px]">Share</span>
            <svg width="8" height="6" viewBox="0 0 8 6" className="ml-[11px]"><path d="M1 1l3 3 3-3" fill="none" stroke="#fff" /></svg>
          </div>
        </div>
      </div>
      <Ribbon />
      <FormulaBar />
      <Sheet />
      <SheetTabs />
      <StatusBar />
      <MiniToolbar />
      <ContextMenu />
    </div>
  )
}

function TopBar() {
  return (
    <div className="flex h-[51px] shrink-0 items-center border-t-[2px] border-[#e5e5e5] font-['Inter',sans-serif]">
      <Menu size={18} strokeWidth={2} className="ml-[17px] text-[#333]" />
      <div className="ml-[26px] h-[30px] w-[2px] bg-black" />
      <span className="ml-[15px] whitespace-nowrap text-[15px] text-[#333]">QA Setup</span>
      <span className="ml-[11px] whitespace-nowrap text-[15px] text-[#333]">Work Types</span>
      <div className="flex-1" />
      <FaBell size={16} className="text-[#0d6efd]" />
      <div className="relative ml-[24px]">
        <FaStar size={16} className="text-[#0d6efd]" />
        <div className="absolute -right-[6px] -top-[8px] flex h-[12px] w-[12px] items-center justify-center rounded-full border border-[#e33] bg-[#ffb3b3] text-[8px] leading-none text-[#c33]">!</div>
      </div>
      <FaQuestionCircle size={17} className="ml-[24px] text-[#0d6efd]" />
      <span className="ml-[21px] whitespace-nowrap text-[15.3px] text-[#2a78f0]">NRX069: BOONOO BOONOO BRIDGE</span>
      <FaUserCircle size={26} className="ml-[17px] shrink-0 text-[#0a6fc2]" />
    </div>
  )
}

export default function App() {
  return (
    <div className="flex h-[829px] w-[1910px] flex-col overflow-hidden border-b-[5px] border-l-[4px] border-r-[6px] border-t-[5px] border-black bg-white">
      <TopBar />
      <div className="h-[2px] shrink-0 bg-black" />
      <div className="flex h-[50px] shrink-0 items-center bg-[#0071c5] font-['Inter',sans-serif] text-white">
        <ChevronLeft size={15} strokeWidth={3} className="ml-[7px]" />
        <span className="ml-[15px] text-[19.5px]">Import CSV</span>
      </div>
      <div className="flex min-h-0 flex-1">
        <div className="w-[430px] shrink-0 font-['Inter',sans-serif]">
          <div className="-mt-[2px] ml-[3px] h-[70px] w-[257px] border-[5px] border-[#ed1c24] pl-[3px] pt-[12px]">
            <div className="flex h-[35px] w-[226px] items-center justify-center whitespace-nowrap bg-white text-[13.5px] tracking-[1px] text-[#222] shadow-[0_1px_4px_rgba(0,0,0,0.3)]">IMPORT FROM CLIPBOARD</div>
          </div>
          <div className="ml-[14px] mt-[9px] flex items-center">
            <div className="flex h-[36px] w-[181px] items-center justify-center whitespace-nowrap bg-white text-[14px] tracking-[1px] text-[#222] shadow-[0_1px_4px_rgba(0,0,0,0.3)]">IMPORT FROM FILE</div>
            <span className="ml-[9px] text-[15px] text-[#444]">or Drop a file here</span>
          </div>
        </div>
        <ExcelWindow />
      </div>
    </div>
  )
}
